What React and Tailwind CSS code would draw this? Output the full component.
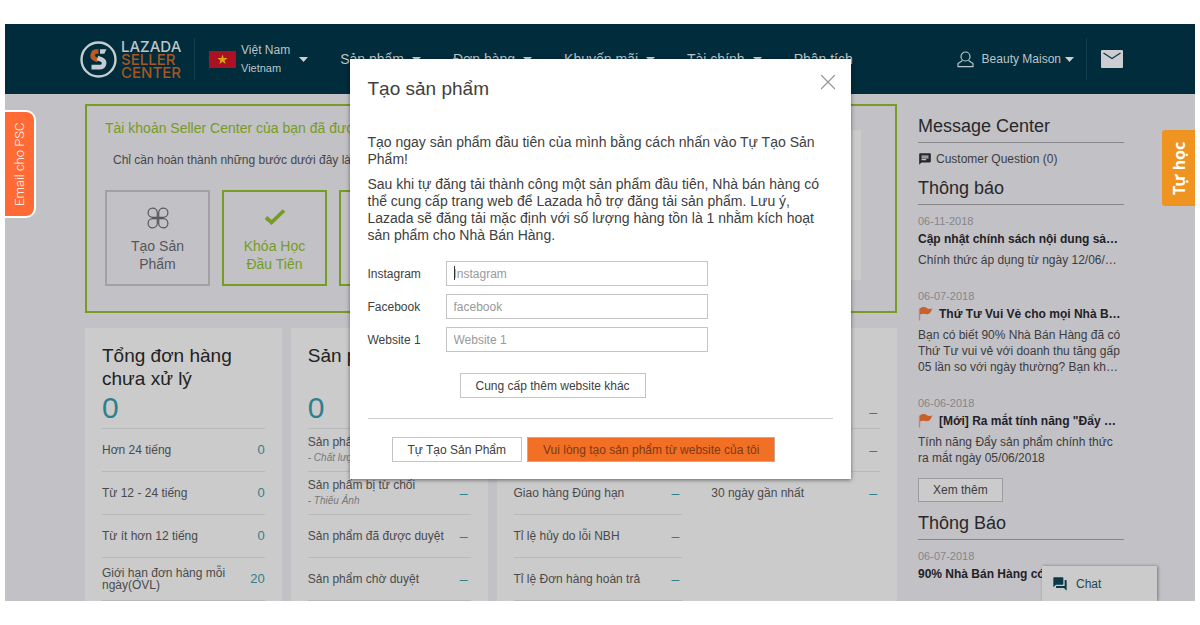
import React from 'react';
import { X } from 'lucide-react';
import { MdChat, MdForum } from 'react-icons/md';

const navItems = [
  { label: 'Sản phẩm', menu: true },
  { label: 'Đơn hàng', menu: true },
  { label: 'Khuyến mãi', menu: true },
  { label: 'Tài chính', menu: true },
  { label: 'Phân tích', menu: false },
];

const orderRows = [
  { label: 'Hơn 24 tiếng', value: '0' },
  { label: 'Từ 12 - 24 tiếng', value: '0' },
  { label: 'Từ ít hơn 12 tiếng', value: '0' },
  { label: 'Giới hạn đơn hàng mỗi ngày(OVL)', value: '20' },
];

const productRows = [
  { label: 'Sản phẩm', note: '- Chất lượng' },
  { label: 'Sản phẩm bị từ chối', note: '- Thiếu Ảnh', value: '–' },
  { label: 'Sản phẩm đã được duyệt', value: '–' },
  { label: 'Sản phẩm chờ duyệt', value: '–' },
];

const performanceRows = [
  { label: '' },
  { label: 'Giao hàng Đúng hạn', value: '–' },
  { label: 'Tỉ lệ hủy do lỗi NBH', value: '–' },
  { label: 'Tỉ lệ Đơn hàng hoàn trả', value: '–' },
];

const revenueRows = [
  { label: '', value: '–' },
  { label: '30 ngày gần nhất', value: '–' },
];

const news = [
  {
    date: '06-11-2018',
    title: 'Cập nhật chính sách nội dung sả…',
    text: 'Chính thức áp dụng từ ngày 12/06/…',
  },
  {
    date: '06-07-2018',
    flag: true,
    title: 'Thứ Tư Vui Vẻ cho mọi Nhà B…',
    text: 'Bạn có biết 90% Nhà Bán Hàng đã có Thứ Tư vui vẻ với doanh thu tăng gấp 05 lần so với ngày thường? Bạn kh…',
  },
  {
    date: '06-06-2018',
    flag: true,
    title: '[Mới] Ra mắt tính năng "Đẩy …',
    text: 'Tính năng Đẩy sản phẩm chính thức ra mắt ngày 05/06/2018',
  },
];

const fields = [
  { id: 'instagram', label: 'Instagram', placeholder: 'Instagram', caret: true },
  { id: 'facebook', label: 'Facebook', placeholder: 'facebook' },
  { id: 'website-1', label: 'Website 1', placeholder: 'Website 1' },
];

const Caret = () => (
  <svg className="h-[5px] w-[9px] shrink-0 fill-[#cbd0d3]" viewBox="0 0 9 5" aria-hidden="true">
    <path d="M0 0h9L4.5 5z" />
  </svg>
);

const LogoMark = () => (
  <svg className="size-[37px] shrink-0" viewBox="0 0 37 37" fill="none" aria-hidden="true">
    <circle cx="18.5" cy="18.5" r="17" stroke="#c3cdd2" strokeWidth="2.4" />
    <path d="M18.500 10.500h-2a3.900 3.900 0 0 0-1.400 7.500l3 1.200" stroke="#b95a20" strokeWidth="4.600" />
    <path d="M17.500 17l4.200 1.600a3.900 3.900 0 0 1-1.400 7.500h-8.800" stroke="#c3cdd2" strokeWidth="4.600" />
    <path d="M20 8.200h6.500l-2.200 4.600h-4.300z" fill="#c3cdd2" />
  </svg>
);

const VietnamFlag = () => (
  <svg className="h-[17px] w-[27px] shrink-0" viewBox="0 0 27 17" aria-hidden="true">
    <path fill="#ab1023" d="M0 0h27v17H0z" />
    <path fill="#d9a514" d="M13.500 3.500l1.250 3.600h3.900l-3.100 2.300 1.150 3.700-3.200-2.300-3.200 2.300 1.150-3.700-3.100-2.300h3.900z" />
  </svg>
);

const FlagIcon = () => (
  <svg className="h-3.5 w-[15px] shrink-0" viewBox="0 0 15 14" aria-hidden="true">
    <path d="M1.500 1.500v12" stroke="#b98a7c" strokeWidth="1.400" />
    <path fill="#c8602c" d="M2 1.500C5-.8 7 .2 9 1.300c1.800.9 3.200.8 5.500.2-1.500 2-1.500 4-3.500 5.300-3 1.400-5-1.300-9 .7z" />
  </svg>
);

const Header = () => (
  <header className="flex h-[70px] items-center bg-[#002c3c] pr-[72px] pl-[75px] text-[#bcc5c9]">
    <a href="#home" className="flex items-center gap-1">
      <LogoMark />
      <span className="flex w-[66px] flex-col font-['Inter',sans-serif] text-[15px] leading-[13px] font-medium">
        <span>LAZADA</span>
        <span className="text-[#a85520]">SELLER</span>
        <span className="text-[#a85520]">CENTER</span>
      </span>
    </a>
    <span className="ml-[7px] h-[42px] w-px bg-[#163f4e]" />
    <button type="button" className="ml-3.5 flex items-center gap-[5px] text-left">
      <VietnamFlag />
      <span className="text-xs leading-[18px] whitespace-nowrap">
        Việt Nam
        <span className="block text-[11px]">Vietnam</span>
      </span>
      <span className="ml-1">
        <Caret />
      </span>
    </button>
    <nav className="ml-8 flex gap-8 text-sm whitespace-nowrap">
      {navItems.map((item) => (
        <a key={item.label} href="#nav" className="flex items-center gap-2">
          {item.label}
          {item.menu && <Caret />}
        </a>
      ))}
    </nav>
    <button type="button" className="ml-auto flex items-center gap-2 text-xs whitespace-nowrap">
      <svg className="size-[17px]" viewBox="0 0 17 17" fill="none" stroke="currentColor" strokeWidth="1.200" aria-hidden="true">
        <circle cx="8.500" cy="5.500" r="4.500" />
        <path d="M5.500 9.500L1 12.500v3.200h15v-3.200l-4.500-3" />
      </svg>
      <span className="flex items-center gap-1">
        Beauty Maison
        <Caret />
      </span>
    </button>
    <span className="ml-3 h-[42px] w-px bg-[#163f4e]" />
    <a href="#mail" aria-label="Mail" className="ml-3.5">
      <svg className="h-[18px] w-[22px]" viewBox="0 0 22 18" fill="none" aria-hidden="true">
        <rect width="22" height="18" rx="1" fill="#cbcdd0" />
        <path d="M2.500 3l8.500 5.500L19.500 3" stroke="#12394a" strokeWidth="1.300" />
      </svg>
    </a>
  </header>
);

const Onboarding = () => (
  <section className="flex justify-between border-2 border-[#769c22] pt-3 pr-[34px] pb-[25px] pl-[18px]">
    <div className="w-[460px]">
      <h2 className="text-sm leading-5 text-[#769c22]">Tài khoản Seller Center của bạn đã được kích hoạt</h2>
      <p className="mt-3 pl-2 text-xs leading-5 text-[#46464a]">Chỉ cần hoàn thành những bước dưới đây là xong</p>
      <div className="mt-5 flex gap-3 text-center text-sm leading-[18px]">
        <a href="#create" className="flex h-24 w-[105px] flex-col items-center border-2 border-[#a0a0a5] pt-[15px] text-[#56565a]">
          <svg className="mb-2 size-[22px]" viewBox="0 0 22 22" fill="none" stroke="currentColor" strokeWidth="1.200" aria-hidden="true">
            <path d="M10.300 10.300V5.500a4.600 4.600 0 1 0-4.600 4.800zM11.700 10.300V5.500a4.600 4.600 0 1 1 4.600 4.800zM10.300 11.700v4.800a4.600 4.600 0 1 1-4.600-4.800zM11.700 11.700v4.800a4.600 4.600 0 1 0 4.600-4.800z" />
          </svg>
          Tạo Sản <br /> Phẩm
        </a>
        <a href="#course" className="flex h-24 w-[105px] flex-col items-center border-2 border-[#769c22] pt-[15px] text-[#769c22]">
          <svg className="mb-2 size-[22px]" viewBox="0 0 22 22" fill="none" stroke="currentColor" strokeWidth="3.800" aria-hidden="true">
            <path d="M2 10.500l5.500 5L20 3.500" />
          </svg>
          Khóa Học <br /> Đầu Tiên
        </a>
        <span className="h-24 w-[105px] border-2 border-[#769c22]" />
      </div>
    </div>
    <div className="mt-3 h-[150px] w-[270px] bg-[#cbcbcb]" />
  </section>
);

const StatValue = ({ value }) =>
  value === '–' ? (
    <span className="pr-[3px] text-sm leading-5 text-[#2f7f8d]">{value}</span>
  ) : (
    <span className="pl-2 text-[13px] text-[#2f7f8d]">{value}</span>
  );

const StatColumn = ({ title, total, totalRight, rows, open }) => (
  <div className="min-w-0 flex-1">
    <div className="flex h-[100px] flex-col justify-between pt-4 pb-1">
      <h3 className="text-[19px] leading-[23px] text-[#222]">{title}</h3>
      {total && <p className="text-[30px] leading-8 text-[#2f7f8d]">{total}</p>}
      {totalRight && (
        <p className="text-right">
          <StatValue value={totalRight} />
        </p>
      )}
    </div>
    <ul>
      {rows.map((row, index) => (
        <li key={index} className="flex h-[43px] items-center justify-between border-t border-[#b6babb] text-xs text-[#4a4a4c]">
          <span className="leading-3">
            {row.label}
            {row.note && <em className="mt-1 block text-[10px] leading-3 text-[#77777a]">{row.note}</em>}
          </span>
          <StatValue value={row.value} />
        </li>
      ))}
      {!open && <li className="h-px bg-[#b6babb]" />}
    </ul>
  </div>
);

const Stats = () => (
  <section className="mt-[15px] grid grid-cols-[197fr_197fr_401fr] gap-[9px]">
    <article className="flex bg-[#cbcbcb] px-[17px]">
      <StatColumn title="Tổng đơn hàng chưa xử lý" total="0" rows={orderRows} />
    </article>
    <article className="flex bg-[#cbcbcb] px-[17px]">
      <StatColumn title="Sản phẩm" total="0" rows={productRows} />
    </article>
    <article className="flex gap-[29px] bg-[#cbcbcb] px-[17px]">
      <StatColumn rows={performanceRows} />
      <StatColumn totalRight="–" rows={revenueRows} open />
    </article>
  </section>
);

const SideHeading = ({ children }) => (
  <h2 className="border-b border-[#88888c] pb-1 text-lg leading-6 text-[#28282b]">{children}</h2>
);

const Sidebar = () => (
  <aside className="pt-[10px] text-xs text-[#3c3c40]">
    <SideHeading>Message Center</SideHeading>
    <a href="#questions" className="mt-2 mb-[9px] flex items-center gap-1 leading-4">
      <MdChat className="size-3.5 text-[#28282b]" />
      Customer Question (0)
    </a>
    <SideHeading>Thông báo</SideHeading>
    {news.map((item) => (
      <article key={item.date} className="mt-2 mb-5">
        <time className="block text-[11px] leading-4 text-[#85858a]">{item.date}</time>
        <h3 className="flex items-center gap-1.5 leading-5 font-bold whitespace-nowrap text-[#222226]">
          {item.flag && <FlagIcon />}
          {item.title}
        </h3>
        <p className="mt-[3px] leading-4">{item.text}</p>
      </article>
    ))}
    <button type="button" className="-mt-2 mb-[9px] block border border-[#9b9ba0] bg-[#cbcbcc] px-3.5 leading-[22px]">
      Xem thêm
    </button>
    <SideHeading>Thông Báo</SideHeading>
    <time className="mt-2 block text-[11px] leading-4 text-[#85858a]">06-07-2018</time>
    <h3 className="leading-5 font-bold text-[#222226]">90% Nhà Bán Hàng có</h3>
  </aside>
);

const CreateProductModal = () => (
  <div role="dialog" aria-labelledby="modal-title" className="w-[501px] bg-white px-[18px] pt-4 pb-[17px] text-[#404040] shadow-[0_1px_4px_rgba(0,0,0,0.5)]">
    <div className="flex items-start justify-between">
      <h1 id="modal-title" className="text-[19px] leading-7">Tạo sản phẩm</h1>
      <button type="button" aria-label="Đóng" className="-mt-1.5 -mr-2 text-[#999]">
        <X size={26} strokeWidth={1.2} />
      </button>
    </div>
    <p className="mt-[31px] text-sm leading-[17px]">Tạo ngay sản phẩm đầu tiên của mình bằng cách nhấn vào Tự Tạo Sản Phẩm!</p>
    <p className="mt-2 text-sm leading-[17px]">
      Sau khi tự đăng tải thành công một sản phẩm đầu tiên, Nhà bán hàng có thể cung cấp trang web để Lazada hỗ trợ đăng tải sản phẩm. Lưu ý, Lazada sẽ đăng tải mặc định với số lượng hàng tồn là 1 nhằm kích hoạt sản phẩm cho Nhà Bán Hàng.
    </p>
    <form className="mt-[17px] flex flex-col gap-2 text-xs">
      {fields.map((field) => (
        <div key={field.id} className="flex items-center">
          <label htmlFor={field.id} className="w-[78px]">{field.label}</label>
          <div className="relative">
            <input
              id={field.id}
              placeholder={field.placeholder}
              className="block h-[25px] w-[262px] border border-[#c4c4c4] px-[7px] placeholder:text-[#999]"
            />
            {field.caret && <span className="absolute top-[5px] left-2 h-3.5 w-px bg-[#333]" />}
          </div>
        </div>
      ))}
    </form>
    <button type="button" className="mt-[21px] ml-[92px] block h-[25px] border border-[#c4c4c4] px-[15px] text-xs">
      Cung cấp thêm website khác
    </button>
    <hr className="mt-5 border-[#ccc]" />
    <div className="mt-[18px] ml-6 flex gap-[5px] text-xs">
      <button type="button" className="h-[25px] border border-[#c4c4c4] px-[15px]">Tự Tạo Sản Phẩm</button>
      <button type="button" className="h-[25px] border border-[#c8a890] bg-[#f26f26] px-[15px] text-[#7d3a14]">
        Vui lòng tạo sản phẩm từ website của tôi
      </button>
    </div>
  </div>
);

const App = () => (
  <div className="min-h-screen bg-white px-[5px] py-6 font-['Liberation_Sans',Arial,sans-serif]">
    <div className="relative h-[calc(100vh-48px)] overflow-hidden bg-[#c2c1c6]">
      <Header />
      <main className="grid grid-cols-[1fr_206px] gap-[21px] pt-2.5 pr-[71px] pl-20">
        <div>
          <Onboarding />
          <Stats />
        </div>
        <Sidebar />
      </main>

      <a
        href="#email"
        className="absolute top-[86px] left-0 flex h-[108px] w-[31px] rotate-180 items-center justify-center rounded-l-[10px] border-2 border-r-0 border-white bg-[#ff6a35] font-['Roboto',sans-serif] text-[13px] font-light text-white [writing-mode:vertical-rl]"
      >
        Email cho PSC
      </a>
      <a
        href="#learn"
        className="absolute top-[106px] right-0 flex h-[76px] w-[33px] rotate-180 items-center justify-center rounded-r-[3px] bg-[#ef9321] font-['Noto_Sans',sans-serif] text-base font-bold text-white [writing-mode:vertical-rl]"
      >
        Tự học
      </a>
      <button
        type="button"
        className="absolute right-[38px] bottom-0 flex h-[35px] w-[115px] items-center gap-2 bg-[#cbcbcb] pl-2.5 text-xs text-[#1d4653] shadow-[1px_0_3px_rgba(0,0,0,0.4)]"
      >
        <MdForum className="size-4 text-[#0c3a49]" />
        Chat
      </button>

      <div className="absolute inset-0 flex items-start justify-center pt-[35px]">
        <CreateProductModal />
      </div>
    </div>
  </div>
);

export default App;
